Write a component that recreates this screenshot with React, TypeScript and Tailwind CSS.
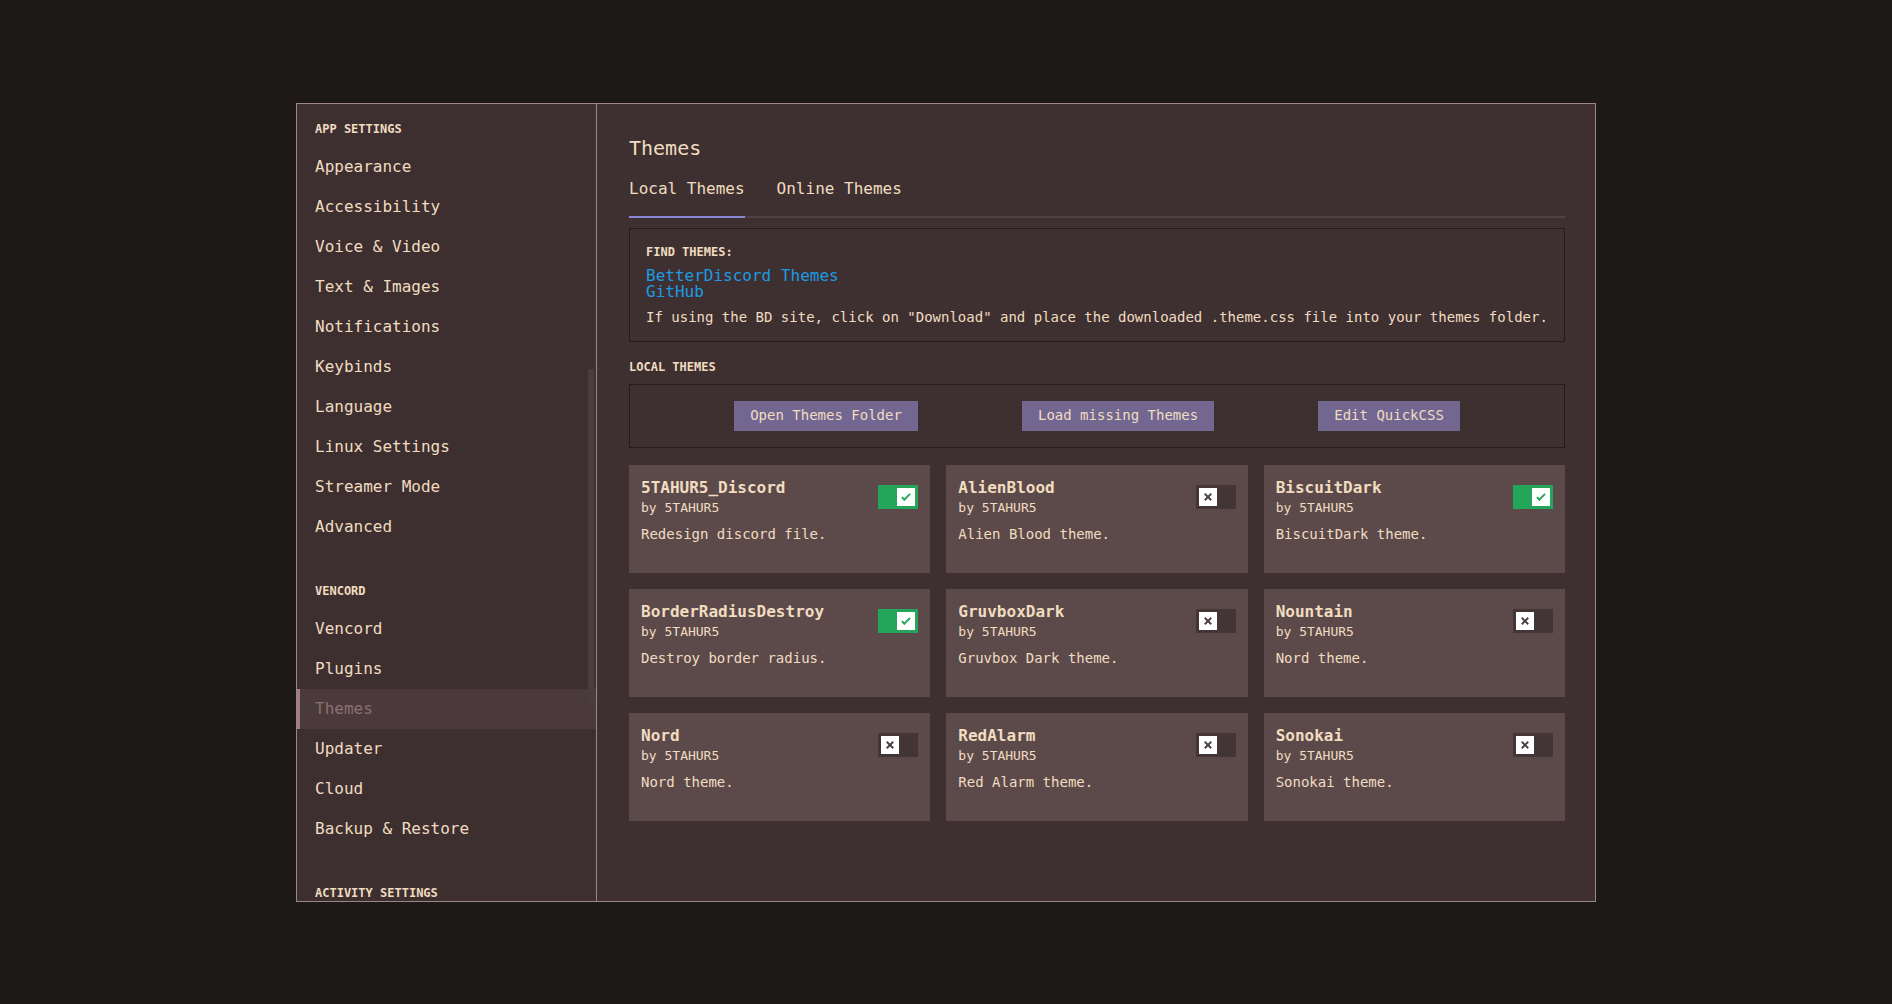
import { useState } from "react";

const mono = "font-['DejaVu_Sans_Mono','Liberation_Mono',monospace]";

interface ITema {
  nombre: string;
  desc: string;
  activo: boolean;
}

const secciones = [
  {
    titulo: "App Settings",
    items: [
      "Appearance",
      "Accessibility",
      "Voice & Video",
      "Text & Images",
      "Notifications",
      "Keybinds",
      "Language",
      "Linux Settings",
      "Streamer Mode",
      "Advanced",
    ],
  },
  {
    titulo: "Vencord",
    items: ["Vencord", "Plugins", "Themes", "Updater", "Cloud", "Backup & Restore"],
  },
  { titulo: "Activity Settings", items: [] as string[] },
];

const Check = () => (
  <svg viewBox="0 0 20 20" className="w-[16px] h-[16px]">
    <path fill="#23a55a" d="M7.89561 14.8538L6.30462 13.2629L14.3099 5.25755L15.9009 6.84854L7.89561 14.8538Z" />
    <path fill="#23a55a" d="M4.08643 11.0903L5.67742 9.49929L9.4485 13.2704L7.85751 14.8614L4.08643 11.0903Z" />
  </svg>
);

const Cruz = () => (
  <svg viewBox="0 0 20 20" className="w-[16px] h-[16px]">
    <path fill="#4a3b3c" d="M5.13231 6.72963L6.7233 5.13864L14.855 13.2704L13.264 14.8614L5.13231 6.72963Z" />
    <path fill="#4a3b3c" d="M13.2704 5.13864L14.8614 6.72963L6.72963 14.8614L5.13864 13.2704L13.2704 5.13864Z" />
  </svg>
);

const Switch = ({ on }: { on: boolean }) => (
  <div
    className={
      "w-[40px] h-[24px] p-[3px] flex shrink-0 " +
      (on ? "bg-[#23a55a] justify-end" : "bg-[#433536] justify-start")
    }
  >
    <div className="w-[18px] h-[18px] bg-white flex items-center justify-center">
      {on ? <Check /> : <Cruz />}
    </div>
  </div>
);

const TarjetaTema = ({ tema }: { tema: ITema }) => (
  <div className="bg-[#5c4a4b] h-[108px] px-3 pt-[13px]">
    <div className="flex justify-between">
      <div>
        <div className="text-[16px] leading-[20px] font-bold">{tema.nombre}</div>
        <div className="text-[13px] leading-[16px] mt-[2px]">by 5TAHUR5</div>
      </div>
      <div className="mt-[7px]">
        <Switch on={tema.activo} />
      </div>
    </div>
    <div className="text-[14px] leading-[20px] mt-2">{tema.desc}</div>
  </div>
);

const App = () => {
  const [temas] = useState<ITema[]>([
    { nombre: "5TAHUR5_Discord", desc: "Redesign discord file.", activo: true },
    { nombre: "AlienBlood", desc: "Alien Blood theme.", activo: false },
    { nombre: "BiscuitDark", desc: "BiscuitDark theme.", activo: true },
    { nombre: "BorderRadiusDestroy", desc: "Destroy border radius.", activo: true },
    { nombre: "GruvboxDark", desc: "Gruvbox Dark theme.", activo: false },
    { nombre: "Nountain", desc: "Nord theme.", activo: false },
    { nombre: "Nord", desc: "Nord theme.", activo: false },
    { nombre: "RedAlarm", desc: "Red Alarm theme.", activo: false },
    { nombre: "Sonokai", desc: "Sonokai theme.", activo: false },
  ]);

  return (
    <div
      className={
        "w-full h-screen bg-[#1d1918] flex items-center justify-center text-[#f1dcc0] " + mono
      }
    >
      <div className="w-[1300px] h-[799px] border border-[#9e8684] bg-[#3e3031] flex overflow-hidden">
        {/* barra lateral */}
        <div className="w-[300px] shrink-0 border-r border-[#9e8684] bg-[#3d2f30] relative overflow-hidden pt-[17px]">
          {secciones.map((sec, i) => (
            <div key={sec.titulo} className={i > 0 ? "mt-[36px]" : ""}>
              <div className="pl-[18px] text-[12px] leading-[16px] font-bold uppercase mb-[10px]">
                {sec.titulo}
              </div>
              {sec.items.map((item) =>
                item === "Themes" ? (
                  <div
                    key={item}
                    className="h-[40px] flex items-center pl-[15px] border-l-[3px] border-[#9e8080] bg-[#4a3a3b] text-[#8b7072] text-[16px]"
                  >
                    {item}
                  </div>
                ) : (
                  <div key={item} className="h-[40px] flex items-center pl-[18px] text-[16px]">
                    {item}
                  </div>
                )
              )}
            </div>
          ))}
          <div className="absolute right-[2px] top-[265px] w-[6px] h-[332px] bg-[#4b3d3e]" />
        </div>

        {/* contenido */}
        <div className="flex-1 pl-8 pr-[30px] pt-[30px]">
          <div className="text-[20px] leading-[28px]">Themes</div>

          <div className="flex gap-8 mt-[15px] border-b-2 border-[#4c4245]">
            <div className="text-[16px] leading-[24px] pb-[15px] border-b-2 border-[#8a86d6] -mb-[2px]">
              Local Themes
            </div>
            <div className="text-[16px] leading-[24px] pb-[15px]">Online Themes</div>
          </div>

          <div className="mt-[10px] border border-[#241b1c] px-4 pt-[15px] pb-[14px]">
            <div className="text-[12px] leading-[16px] font-bold">FIND THEMES:</div>
            <div className="mt-2 text-[16px] leading-[16px] text-[#1b9be3]">
              <div>BetterDiscord Themes</div>
              <div>GitHub</div>
            </div>
            <div className="mt-[7px] text-[14px] leading-[20px]">
              If using the BD site, click on "Download" and place the downloaded .theme.css file into
              your themes folder.
            </div>
          </div>

          <div className="mt-[17px] text-[12px] leading-[16px] font-bold">LOCAL THEMES</div>

          <div className="mt-[9px] border border-[#241b1c] py-4 flex justify-evenly">
            {["Open Themes Folder", "Load missing Themes", "Edit QuickCSS"].map((b) => (
              <div key={b} className="h-[30px] px-4 flex items-center bg-[#726791] text-[14px]">
                {b}
              </div>
            ))}
          </div>

          <div className="mt-[17px] grid grid-cols-3 gap-4">
            {temas.map((t) => (
              <TarjetaTema key={t.nombre} tema={t} />
            ))}
          </div>
        </div>
      </div>
    </div>
  );
};

export default App;
